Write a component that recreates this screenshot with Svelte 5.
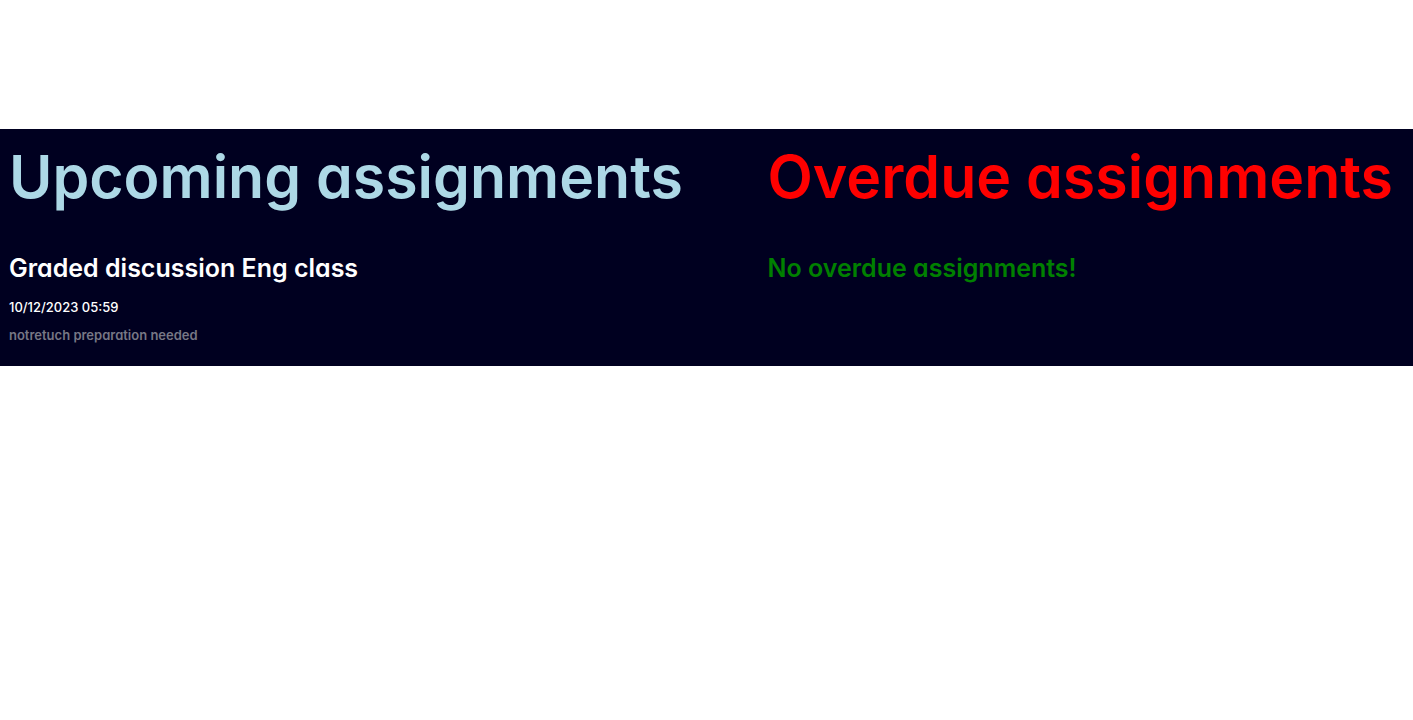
<script>
  const upcoming = [
    { title: 'Graded discussion Eng class', due: '10/12/2023 05:59', note: 'notretuch preparation needed' },
  ];
  const overdue = [];
</script>

<main>
  <section class="upcoming">
    <h1>Upcoming assignments</h1>
    {#each upcoming as item}
      <article>
        <h2>{item.title}</h2>
        <p class="due">{item.due}</p>
        <p class="note">{item.note}</p>
      </article>
    {/each}
  </section>
  <section class="overdue">
    <h1>Overdue assignments</h1>
    {#if overdue.length === 0}
      <h2 class="clear">No overdue assignments!</h2>
    {/if}
  </section>
</main>

<style>
  :global(body) {
    background: #fff;
  }
  main {
    display: flex;
    justify-content: space-between;
    margin-top: 129px;
    padding: 14px 20px 21px 9px;
    background: #000020;
    color: #fff;
    font-family: Inter, sans-serif;
    font-feature-settings: "cv11";
  }
  h1, h2, p {
    margin: 0;
    white-space: nowrap;
  }
  h1 {
    margin-bottom: 41px;
    font-size: 59px;
    line-height: 68px;
    font-weight: 600;
  }
  h2 {
    font-size: 25px;
    line-height: 32px;
    font-weight: 600;
  }
  p {
    font-size: 13px;
    line-height: 20px;
    margin-top: 8px;
  }
  .upcoming h1 {
    color: lightblue;
  }
  .overdue h1 {
    color: red;
  }
  .clear {
    color: green;
  }
  .due {
    margin-top: 13px;
    font-weight: 500;
  }
  .note {
    color: #777785;
    font-weight: 600;
  }
</style>
